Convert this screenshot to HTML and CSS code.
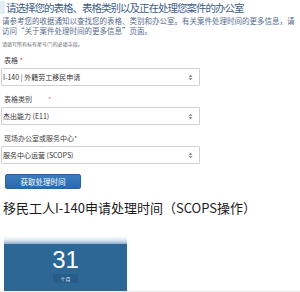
FILE: index.html
```html
<!DOCTYPE html>
<html lang="zh-CN">
<head>
<meta charset="utf-8">
<link rel="stylesheet" href="styles.css">
</head>
<body>
<div class="page">
  <h1 class="title">请选择您的表格、表格类别以及正在处理您案件的办公室</h1>
  <p class="intro">请参考您的收据通知以查找您的表格、类别和办公室。有关案件处理时间的更多信息，请<br>访问“关于案件处理时间的更多信息”页面。</p>
  <p class="note">请填写所有标有星号(*)的必填字段。</p>
  <form class="form">
    <div class="field">
      <label class="label">表格 <span class="req">*</span></label>
      <div class="select"><span class="value">I-140 | 外籍劳工移民申请</span><span class="arrows"><svg width="5" height="7" viewBox="0 0 5 7"><path d="M0.5 3 L2.5 0.8 L4.5 3 Z M0.5 4 L2.5 6.2 L4.5 4 Z" fill="#8a8a8a"/></svg></span></div>
    </div>
    <div class="field">
      <label class="label">表格类别<span class="req wide">*</span></label>
      <div class="select"><span class="value">杰出能力 (E11)</span><span class="arrows"><svg width="5" height="7" viewBox="0 0 5 7"><path d="M0.5 3 L2.5 0.8 L4.5 3 Z M0.5 4 L2.5 6.2 L4.5 4 Z" fill="#8a8a8a"/></svg></span></div>
    </div>
    <div class="field">
      <label class="label">现场办公室或服务中心<span class="req dark">*</span></label>
      <div class="select"><span class="value">服务中心运营 (SCOPS)</span><span class="arrows"><svg width="5" height="7" viewBox="0 0 5 7"><path d="M0.5 3 L2.5 0.8 L4.5 3 Z M0.5 4 L2.5 6.2 L4.5 4 Z" fill="#8a8a8a"/></svg></span></div>
    </div>
    <button type="button" class="btn">获取处理时间</button>
  </form>
  <h2 class="result-title">移民工人I-140申请处理时间（SCOPS操作）</h2>
  <div class="card">
    <div class="card-top"></div>
    <div class="card-body">
      <div class="num">31</div>
      <div class="unit">个月</div>
    </div>
  </div>
</div>
</body>
</html>
```
FILE: styles.css
```css
html, body {
  margin: 0;
  padding: 0;
  background: #ffffff;
}
body {
  font-family: "Noto Sans CJK SC", "Noto Sans", sans-serif;
  width: 300px;
  height: 292px;
  overflow: hidden;
}
.page {
  display: flex;
  flex-direction: column;
  align-items: flex-start;
  height: 292px;
  border-bottom: 1px solid #ececec;
  box-sizing: border-box;
}
.title {
  margin: 0;
  font-size: 10.5px;
  font-weight: 400;
  letter-spacing: -1px;
  line-height: 16px;
  height: 16px;
  color: #3d5d87;
  padding-left: 6px;
  position: relative;
  white-space: nowrap;
}
.title::before {
  content: "";
  position: absolute;
  left: 0;
  top: 1px;
  width: 5px;
  height: 13px;
  background: #e3edf8;
}
.intro {
  margin: 0;
  padding-left: 2px;
  font-size: 7.5px;
  line-height: 10px;
  color: #566c8e;
  white-space: nowrap;
}
.note {
  margin: 4px 0 0;
  padding-left: 2px;
  font-size: 5px;
  line-height: 8px;
  color: #666;
}
.form {
  margin: 7px 0 0;
  display: flex;
  flex-direction: column;
  align-items: flex-start;
  gap: 8px;
}
.field {
  display: flex;
  flex-direction: column;
  gap: 3px;
}
.label {
  padding-left: 4px;
  font-size: 7px;
  line-height: 10px;
  color: #444;
}
.req {
  color: #d43a3a;
}
.req.wide {
  margin-left: 16px;
  color: #d88;
}
.req.dark {
  color: #555;
}
.select {
  margin-left: 1px;
  width: 199px;
  height: 18px;
  box-sizing: border-box;
  border: 1px solid #d2d2d2;
  border-radius: 1px;
  display: flex;
  align-items: center;
  justify-content: space-between;
  padding: 0 6px 0 1px;
  font-size: 7px;
  color: #333;
  background: #fff;
}
.arrows {
  display: flex;
  align-items: center;
}
.btn {
  margin: 2px 0 0 5px;
  width: 76px;
  height: 15px;
  padding: 0;
  border: 1px solid #2a63a3;
  border-radius: 2px;
  background: linear-gradient(#3a7bc0, #2c68aa);
  color: #fff;
  font-family: "Noto Sans CJK SC", sans-serif;
  font-size: 7.5px;
  line-height: 13px;
}
.result-title {
  margin: 11px 0 0 3px;
  font-size: 13px;
  font-weight: 400;
  line-height: 16px;
  color: #1a1a1a;
  white-space: nowrap;
}
.card {
  margin: 20px 0 0 4px;
  width: 123px;
  display: flex;
  flex-direction: column;
}
.card-top {
  height: 8px;
  background: linear-gradient(180deg, #ffffff 0%, #dfe9f2 50%, #8fb0cc 100%);
}
.card-body {
  height: 47px;
  background: #2c6796;
  display: flex;
  flex-direction: column;
  align-items: center;
}
.num {
  margin-top: 4px;
  font-family: "Liberation Sans", Arial, sans-serif;
  font-size: 24px;
  line-height: 24px;
  color: #fff;
}
.unit {
  margin-top: 2px;
  width: 25px;
  height: 9px;
  background: #285d8a;
  color: #dfe8f2;
  font-size: 5px;
  line-height: 9px;
  text-align: center;
}
```
